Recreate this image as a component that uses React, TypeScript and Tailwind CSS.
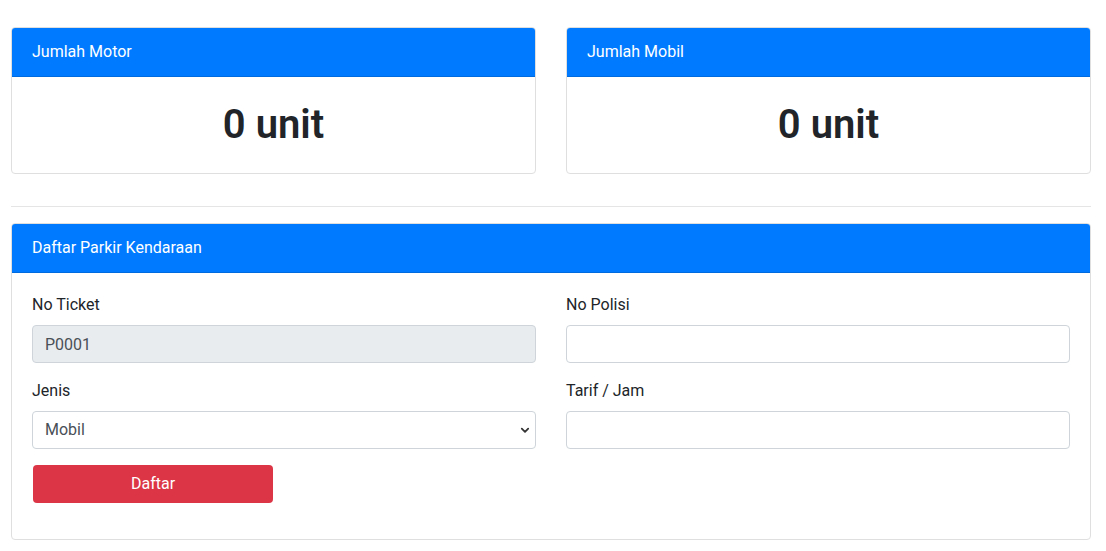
import React from "react";

function Chevron() {
  return (
    <svg width="10" height="10" viewBox="0 0 10 10" className="absolute right-[6px] top-1/2 -translate-y-1/2 pointer-events-none">
      <path d="M1.8 3.6 L5 6.8 L8.2 3.6" fill="none" stroke="#333" strokeWidth="1.8" strokeLinecap="round" strokeLinejoin="round" />
    </svg>
  );
}

function StatCard({ title }: { title: string }) {
  return (
    <div className="flex-1 border border-[#dfdfdf] rounded-[4px] overflow-hidden bg-white">
      <div className="bg-[#007bff] text-white px-5 py-3 leading-6 text-[16px] border-b border-black/[0.125]">{title}</div>
      <div className="pt-[24px] pb-[24px] text-center">
        <h1 className="text-[40px] leading-[48px] font-semibold text-[#212529]">0 unit</h1>
      </div>
    </div>
  );
}

export default function App() {
  return (
    <div className="bg-white min-h-[551px] text-[#212529] text-[16px] leading-6" style={{ fontFamily: "Roboto, 'Liberation Sans', sans-serif" }}>
      <div className="ml-[11px] w-[1080px] pt-[27px]">
        <div className="flex gap-[30px]">
          <StatCard title="Jumlah Motor" />
          <StatCard title="Jumlah Mobil" />
        </div>
        <div className="pt-8 pb-4">
          <div className="border-t border-[#e5e5e5]" />
        </div>
        <div className="border border-[#dfdfdf] rounded-[4px] overflow-hidden bg-white">
          <div className="bg-[#007bff] text-white px-5 py-3 leading-6 border-b border-black/[0.125]">Daftar Parkir Kendaraan</div>
          <div className="p-5">
            <div className="grid grid-cols-2 gap-x-[30px]">
              <div>
                <div className="mb-4">
                  <label className="block mb-2">No Ticket</label>
                  <input
                    disabled
                    value="P0001"
                    readOnly
                    className="block w-full h-[38px] px-3 border border-[#ced4da] rounded-[4px] bg-[#e9ecef] text-[#495057] outline-none"
                  />
                </div>
                <div className="mb-4">
                  <label className="block mb-2">Jenis</label>
                  <div className="relative">
                    <select
                      defaultValue="Mobil"
                      className="block w-full h-[38px] pl-3 pr-8 border border-[#ced4da] rounded-[4px] bg-white text-[#495057] appearance-none outline-none"
                    >
                      <option>Motor</option>
                      <option>Mobil</option>
                    </select>
                    <Chevron />
                  </div>
                </div>
                <div className="mb-4">
                  <button className="w-[240px] h-[38px] bg-[#dc3545] text-white rounded-[4px] ml-px">Daftar</button>
                </div>
              </div>
              <div>
                <div className="mb-4">
                  <label className="block mb-2">No Polisi</label>
                  <input className="block w-full h-[38px] px-3 border border-[#ced4da] rounded-[4px] bg-white outline-none" />
                </div>
                <div className="mb-4">
                  <label className="block mb-2">Tarif / Jam</label>
                  <input className="block w-full h-[38px] px-3 border border-[#ced4da] rounded-[4px] bg-white outline-none" />
                </div>
              </div>
            </div>
          </div>
        </div>
      </div>
    </div>
  );
}
